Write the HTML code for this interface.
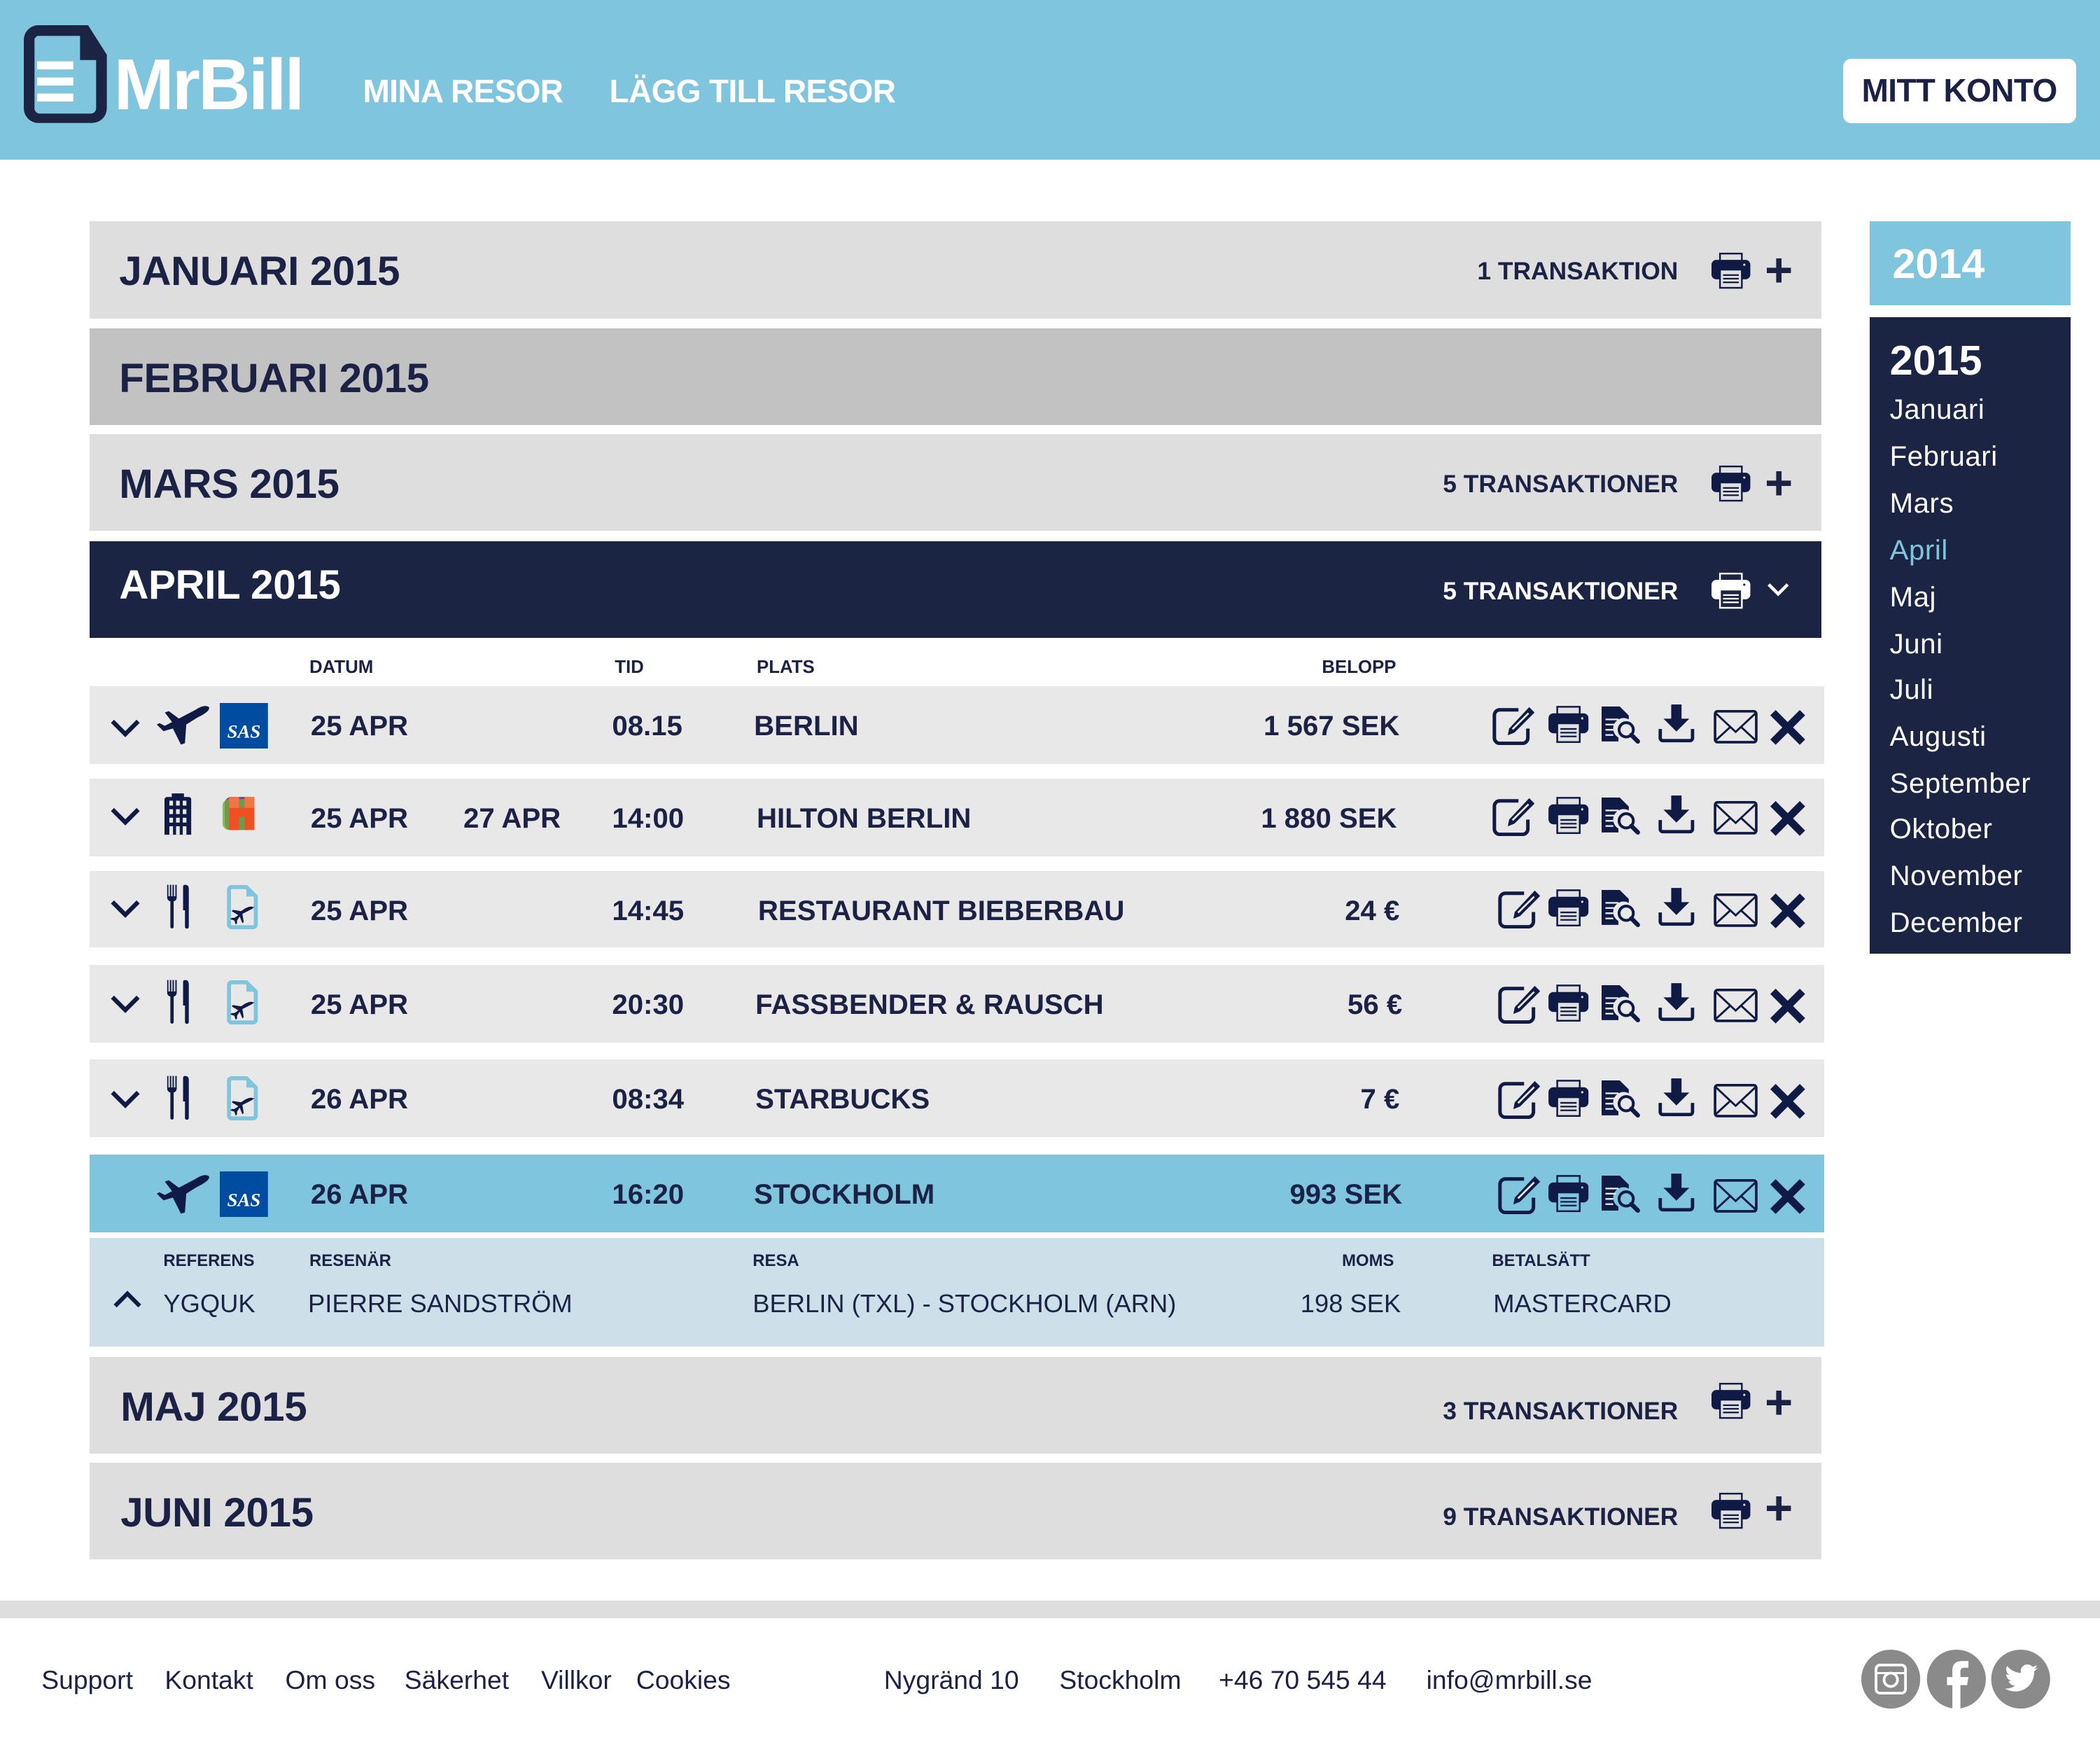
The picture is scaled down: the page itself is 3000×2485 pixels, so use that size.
<!DOCTYPE html>
<html><head><meta charset="utf-8">
<style>
html,body{margin:0;padding:0;background:#fff;}
body{width:1568px;height:1299px;zoom:1.91327;position:relative;overflow:hidden;font-family:"Liberation Sans",sans-serif;color:#1b2246;}
.a{position:absolute;}
.hdr{left:0;top:0;width:1568px;height:119px;background:#7fc5de;}
.nav{color:#fff;font-weight:bold;font-size:24px;top:54px;letter-spacing:-0.3px}
.btn{left:1376px;top:44px;width:174px;height:48px;background:#fff;border-radius:6px;font-weight:bold;font-size:24px;line-height:48px;text-align:center;color:#1b2246;letter-spacing:-0.3px}
.bar{left:67px;width:1293px;height:73px;background:#dedede;}
.bar .t{position:absolute;left:22px;top:0;line-height:75px;font-weight:bold;font-size:30.5px;letter-spacing:-0.2px}
.bar .n{position:absolute;right:107px;top:0;line-height:75px;font-weight:bold;font-size:18.5px;}
.bar .p{position:absolute;left:1211px;top:23px;width:29px;height:28px;}
.bar .pl{position:absolute;left:1252px;top:28px;width:18px;height:18px;}
.row{left:67px;width:1295px;height:58px;background:#e8e8e8;}
.row>*{position:absolute;}
.row .tx{top:0;line-height:60px;font-weight:bold;font-size:21px;white-space:nowrap}
svg{overflow:visible}
.lab{font-weight:bold;font-size:13.5px;top:491px}
.side{left:1396px;width:150px;}
.mon{position:absolute;left:15px;font-size:21px;color:#fff;letter-spacing:0.3px}
.ft{top:1243px;font-size:19.5px;color:#1b2246}
.dv{top:962px;font-size:19px}
</style></head><body>
<svg width="0" height="0" style="position:absolute">
<defs>
<symbol id="prn" viewBox="0 0 32 30"><rect x="7" y="0.8" width="18" height="7" fill="var(--pp,#e0e0e0)" stroke="currentColor" stroke-width="1.4"/><rect x="0" y="6" width="32" height="16" rx="4" fill="currentColor"/><circle cx="27" cy="10" r="0.9" fill="var(--pp,#e0e0e0)"/><rect x="7" y="14" width="18" height="15" fill="var(--pp,#e0e0e0)" stroke="currentColor" stroke-width="1.4"/><path d="M9.5 18.5h13M9.5 21.5h13M9.5 24.5h13" stroke="currentColor" stroke-width="1.3"/></symbol>
<symbol id="edit" viewBox="0 0 34 30"><path d="M20 3H6a4 4 0 0 0-4 4v17a4 4 0 0 0 4 4h17a4 4 0 0 0 4-4v-7" fill="none" stroke="currentColor" stroke-width="2.6"/><path d="M28 1l4 4-15 15-5 2 1-5z" fill="currentColor"/><path d="M27 5l1 1-12 12-1-1z" fill="#e8e8e8"/></symbol>
<symbol id="doc" viewBox="0 0 30 30"><path d="M0 0h14l7 7v3a8 8 0 0 0-8 14v3H0z" fill="currentColor"/><path d="M3 10h10M3 14h8M3 18h6M3 22h6" stroke="#e8e8e8" stroke-width="1.3"/><circle cx="19" cy="18" r="5.5" fill="none" stroke="currentColor" stroke-width="2.2"/><path d="M23 22l5 5" stroke="currentColor" stroke-width="3.4" stroke-linecap="round"/></symbol>
<symbol id="dl" viewBox="0 0 28 30"><path d="M10 0h8v11h6l-10 10L4 11h6z" fill="currentColor"/><path d="M1.5 19v7a2 2 0 0 0 2 2h21a2 2 0 0 0 2-2v-7" fill="none" stroke="currentColor" stroke-width="2.6"/></symbol>
<symbol id="mail" viewBox="0 0 34 26"><rect x="1" y="1" width="32" height="24" rx="2" fill="none" stroke="currentColor" stroke-width="2"/><path d="M1 2l16 15L33 2M1 24l12-11M33 24L21 13" fill="none" stroke="currentColor" stroke-width="1.6"/></symbol>
<symbol id="x" viewBox="0 0 26 26"><path d="M4 0l9 9 9-9 4 4-9 9 9 9-4 4-9-9-9 9-4-4 9-9-9-9z" fill="currentColor"/></symbol>
<symbol id="chev" viewBox="0 0 24 16"><path d="M2 3l10 10 10-10" fill="none" stroke="currentColor" stroke-width="3.4"/></symbol>
<symbol id="plane" viewBox="0 0 40 30"><path d="M39 2C36 0 32 2 29 4L6 16 2 14 0 15l5 5 7-2 6 12 3-1 1-14 8-5c4-2 10-5 9-8z" fill="currentColor"/><path d="M17 11L9 5 6 6l6 8z" fill="currentColor"/></symbol>
<symbol id="bld" viewBox="0 0 22 34"><path d="M2 3h4V0h10v3h4a2 2 0 0 1 2 2v29H0V5a2 2 0 0 1 2-2z" fill="currentColor"/><g fill="#e8e8e8"><rect x="4" y="6" width="3" height="4"/><rect x="9.5" y="6" width="3" height="4"/><rect x="15" y="6" width="3" height="4"/><rect x="4" y="13" width="3" height="4"/><rect x="9.5" y="13" width="3" height="4"/><rect x="15" y="13" width="3" height="4"/><rect x="4" y="20" width="3" height="4"/><rect x="9.5" y="20" width="3" height="4"/><rect x="15" y="20" width="3" height="4"/><rect x="4" y="27" width="3" height="7"/><rect x="9.5" y="27" width="3" height="7"/><rect x="15" y="27" width="3" height="7"/></g></symbol>
<symbol id="fork" viewBox="0 0 20 34"><path d="M1 0v10a3 3 0 0 0 2.5 3V33a1.3 1.3 0 0 0 2.6 0V13A3 3 0 0 0 8.5 10V0H7.4v9H6.3V0H5.2v9H4.2V0H3.1v9H2V0z" fill="currentColor"/><path d="M15 0c2 0 3 1 3 3v30a1.5 1.5 0 0 1-3 0V20h-1.5V3c0-2 0-3 1.5-3z" fill="currentColor"/></symbol>
<symbol id="rcp" viewBox="0 0 30 34"><path d="M10 2h11l7 7v21a2 2 0 0 1-2 2H10a2 2 0 0 1-2-2V4a2 2 0 0 1 2-2z" fill="#e8e8e8" stroke="#7fc5de" stroke-width="3"/><path d="M21 2v7h7" fill="#7fc5de"/><path d="M26 17c-2-1-4 0-6 1l-3 2-6-1-1 1 5 3-3 2-2 0-1 1 3 1 1 3 1-1 0-2 2-3 2 5 1-1-1-6 4-2c2-1 4-2 5-3z" fill="#0f1a45"/></symbol>
<symbol id="sas" viewBox="0 0 36 34"><rect width="36" height="34" fill="#004ca1"/><text x="18" y="26" font-family="Liberation Serif,serif" font-style="italic" font-weight="bold" font-size="14" fill="#fff" text-anchor="middle">SAS</text></symbol>
<symbol id="hot" viewBox="0 0 34 34"><rect x="2" y="2" width="26" height="30" rx="6" fill="#7b3fa0"/><rect x="0" y="4" width="26" height="28" rx="6" fill="#6fb03a" opacity=".8"/><path d="M6 2h9v10h5V2h9v30h-9V20h-5v12H6z" fill="#f04e23" /><path d="M6 2h9v10h5V2h9v10H6z" fill="#f7905a" opacity=".6"/></symbol>
</defs></svg>

<div class="a hdr"></div>
<svg class="a" style="left:18px;top:19px" width="62" height="73" viewBox="0 0 62 73"><path d="M10 0h38l14 22v40a11 11 0 0 1-11 11H10A11 11 0 0 1 0 62V11A11 11 0 0 1 10 0z" fill="#1c2444"/><path d="M10 8h32v18h12v36a4 4 0 0 1-4 4H12a4 4 0 0 1-4-4V10z" fill="#7fc5de"/><path d="M10 30h27M10 42h27M10 54h27" stroke="#fff" stroke-width="6"/></svg>
<div class="a" style="left:85px;top:28px;font-size:54px;font-weight:bold;color:#fff;letter-spacing:-1.5px;line-height:70px">MrBill</div>
<div class="a nav" style="left:271px">MINA RESOR</div>
<div class="a nav" style="left:455px">LÄGG TILL RESOR</div>
<div class="a btn">MITT KONTO</div>

<div class="a bar" style="top:165px"><div class="t">JANUARI 2015</div><div class="n">1 TRANSAKTION</div><svg class="p" style="color:#0f1a45"><use href="#prn"/></svg><svg class="pl" viewBox="0 0 18 18"><path d="M7 0h4v7h7v4h-7v7H7v-7H0V7h7z" fill="#1b2246"/></svg></div>
<div class="a bar" style="top:245px;background:#c2c2c2;height:72px"><div class="t">FEBRUARI 2015</div></div>
<div class="a bar" style="top:324px;height:72px"><div class="t">MARS 2015</div><div class="n">5 TRANSAKTIONER</div><svg class="p" style="color:#0f1a45"><use href="#prn"/></svg><svg class="pl" viewBox="0 0 18 18"><path d="M7 0h4v7h7v4h-7v7H7v-7H0V7h7z" fill="#1b2246"/></svg></div>
<div class="a bar" style="top:404px;height:72px;background:#1c2444;color:#fff"><div class="t" style="line-height:66px">APRIL 2015</div><div class="n">5 TRANSAKTIONER</div><svg class="p" style="color:#fff;--pp:#1c2444"><use href="#prn"/></svg><svg class="pl" style="top:30px;width:17px;height:12px;color:#fff" viewBox="0 0 24 16"><use href="#chev"/></svg></div>

<div class="a lab" style="left:231px">DATUM</div>
<div class="a lab" style="left:459px">TID</div>
<div class="a lab" style="left:565px">PLATS</div>
<div class="a lab" style="left:987px">BELOPP</div>

<div class="a row" style="top:512px">
<svg style="left:15px;top:23px;width:23px;height:16px;color:#0f1a45" viewBox="0 0 24 16"><use href="#chev"/></svg>
<svg style="left:50px;top:14px;width:40px;height:30px;color:#0f1a45"><use href="#plane"/></svg>
<svg style="left:97px;top:13px;width:36px;height:34px"><use href="#sas"/></svg>
<div class="tx" style="left:165px">25 APR</div><div class="tx" style="left:390px">08.15</div><div class="tx" style="left:496px">BERLIN</div><div class="tx" style="right:317px">1 567 SEK</div>
<svg style="left:1047px;top:15px;width:34px;height:30px;color:#0f1a45"><use href="#edit"/></svg><svg style="left:1089px;top:15px;width:30px;height:28px;color:#0f1a45"><use href="#prn"/></svg><svg style="left:1129px;top:15px;width:29px;height:30px;color:#0f1a45"><use href="#doc"/></svg><svg style="left:1171px;top:14px;width:27px;height:29px;color:#0f1a45"><use href="#dl"/></svg><svg style="left:1212px;top:18px;width:34px;height:25px;color:#0f1a45"><use href="#mail"/></svg><svg style="left:1255px;top:18px;width:26px;height:26px;color:#0f1a45"><use href="#x"/></svg>
</div>

<div class="a row" style="top:581px">
<svg style="left:15px;top:20px;width:23px;height:16px;color:#0f1a45" viewBox="0 0 24 16"><use href="#chev"/></svg>
<svg style="left:56px;top:11px;width:20px;height:31px;color:#0f1a45"><use href="#bld"/></svg>
<svg style="left:97px;top:12px;width:32px;height:28px"><use href="#hot"/></svg>
<div class="tx" style="left:165px">25 APR</div><div class="tx" style="left:279px">27 APR</div><div class="tx" style="left:390px">14:00</div><div class="tx" style="left:498px">HILTON BERLIN</div><div class="tx" style="right:319px">1 880 SEK</div>
<svg style="left:1047px;top:14px;width:34px;height:30px;color:#0f1a45"><use href="#edit"/></svg><svg style="left:1089px;top:14px;width:30px;height:28px;color:#0f1a45"><use href="#prn"/></svg><svg style="left:1129px;top:14px;width:29px;height:30px;color:#0f1a45"><use href="#doc"/></svg><svg style="left:1171px;top:13px;width:27px;height:29px;color:#0f1a45"><use href="#dl"/></svg><svg style="left:1212px;top:17px;width:34px;height:25px;color:#0f1a45"><use href="#mail"/></svg><svg style="left:1255px;top:17px;width:26px;height:26px;color:#0f1a45"><use href="#x"/></svg>
</div>

<div class="a row" style="top:650px;height:57px">
<svg style="left:15px;top:20px;width:23px;height:16px;color:#0f1a45" viewBox="0 0 24 16"><use href="#chev"/></svg>
<svg style="left:57px;top:10px;width:19px;height:33px;color:#0f1a45"><use href="#fork"/></svg>
<svg style="left:94px;top:10px;width:34px;height:34px"><use href="#rcp"/></svg>
<div class="tx" style="left:165px">25 APR</div><div class="tx" style="left:390px">14:45</div><div class="tx" style="left:499px">RESTAURANT BIEBERBAU</div><div class="tx" style="right:317px">24 €</div>
<svg style="left:1051px;top:14px;width:34px;height:30px;color:#0f1a45"><use href="#edit"/></svg><svg style="left:1089px;top:14px;width:30px;height:28px;color:#0f1a45"><use href="#prn"/></svg><svg style="left:1129px;top:14px;width:29px;height:30px;color:#0f1a45"><use href="#doc"/></svg><svg style="left:1171px;top:13px;width:27px;height:29px;color:#0f1a45"><use href="#dl"/></svg><svg style="left:1212px;top:17px;width:34px;height:25px;color:#0f1a45"><use href="#mail"/></svg><svg style="left:1255px;top:17px;width:26px;height:26px;color:#0f1a45"><use href="#x"/></svg>
</div>

<div class="a row" style="top:720px">
<svg style="left:15px;top:21px;width:23px;height:16px;color:#0f1a45" viewBox="0 0 24 16"><use href="#chev"/></svg>
<svg style="left:57px;top:11px;width:19px;height:33px;color:#0f1a45"><use href="#fork"/></svg>
<svg style="left:94px;top:11px;width:34px;height:34px"><use href="#rcp"/></svg>
<div class="tx" style="left:165px">25 APR</div><div class="tx" style="left:390px">20:30</div><div class="tx" style="left:497px">FASSBENDER &amp; RAUSCH</div><div class="tx" style="right:315px">56 €</div>
<svg style="left:1051px;top:15px;width:34px;height:30px;color:#0f1a45"><use href="#edit"/></svg><svg style="left:1089px;top:15px;width:30px;height:28px;color:#0f1a45"><use href="#prn"/></svg><svg style="left:1129px;top:15px;width:29px;height:30px;color:#0f1a45"><use href="#doc"/></svg><svg style="left:1171px;top:14px;width:27px;height:29px;color:#0f1a45"><use href="#dl"/></svg><svg style="left:1212px;top:18px;width:34px;height:25px;color:#0f1a45"><use href="#mail"/></svg><svg style="left:1255px;top:18px;width:26px;height:26px;color:#0f1a45"><use href="#x"/></svg>
</div>

<div class="a row" style="top:791px">
<svg style="left:15px;top:21px;width:23px;height:16px;color:#0f1a45" viewBox="0 0 24 16"><use href="#chev"/></svg>
<svg style="left:57px;top:12px;width:19px;height:33px;color:#0f1a45"><use href="#fork"/></svg>
<svg style="left:94px;top:12px;width:34px;height:34px"><use href="#rcp"/></svg>
<div class="tx" style="left:165px">26 APR</div><div class="tx" style="left:390px">08:34</div><div class="tx" style="left:497px">STARBUCKS</div><div class="tx" style="right:317px">7 €</div>
<svg style="left:1051px;top:15px;width:34px;height:30px;color:#0f1a45"><use href="#edit"/></svg><svg style="left:1089px;top:15px;width:30px;height:28px;color:#0f1a45"><use href="#prn"/></svg><svg style="left:1129px;top:15px;width:29px;height:30px;color:#0f1a45"><use href="#doc"/></svg><svg style="left:1171px;top:14px;width:27px;height:29px;color:#0f1a45"><use href="#dl"/></svg><svg style="left:1212px;top:18px;width:34px;height:25px;color:#0f1a45"><use href="#mail"/></svg><svg style="left:1255px;top:18px;width:26px;height:26px;color:#0f1a45"><use href="#x"/></svg>
</div>

<div class="a row" style="top:862px;background:#7fc5de">
<svg style="left:50px;top:14px;width:40px;height:30px;color:#0f1a45"><use href="#plane"/></svg>
<svg style="left:97px;top:12px;width:36px;height:35px"><use href="#sas"/></svg>
<div class="tx" style="left:165px">26 APR</div><div class="tx" style="left:390px">16:20</div><div class="tx" style="left:496px">STOCKHOLM</div><div class="tx" style="right:315px">993 SEK</div>
<svg style="left:1051px;top:15px;width:34px;height:30px;color:#0f1a45"><use href="#edit"/></svg><svg style="left:1089px;top:15px;width:30px;height:28px;color:#0f1a45;--pp:#7fc5de"><use href="#prn"/></svg><svg style="left:1129px;top:15px;width:29px;height:30px;color:#0f1a45"><use href="#doc"/></svg><svg style="left:1171px;top:14px;width:27px;height:29px;color:#0f1a45"><use href="#dl"/></svg><svg style="left:1212px;top:18px;width:34px;height:25px;color:#0f1a45"><use href="#mail"/></svg><svg style="left:1255px;top:18px;width:26px;height:26px;color:#0f1a45"><use href="#x"/></svg>
</div>

<div class="a" style="left:67px;top:924px;width:1295px;height:81px;background:#cde0ea"></div>
<div class="a" style="left:122px;top:934px;font-size:12.5px;font-weight:bold">REFERENS</div>
<div class="a" style="left:231px;top:934px;font-size:12.5px;font-weight:bold">RESENÄR</div>
<div class="a" style="left:562px;top:934px;font-size:12.5px;font-weight:bold">RESA</div>
<div class="a" style="left:1002px;top:934px;font-size:12.5px;font-weight:bold">MOMS</div>
<div class="a" style="left:1114px;top:934px;font-size:12.5px;font-weight:bold">BETALSÄTT</div>
<svg class="a" style="left:84px;top:963px;width:22px;height:15px;color:#0f1a45;transform:rotate(180deg)" viewBox="0 0 24 16"><use href="#chev"/></svg>
<div class="a dv" style="left:122px">YGQUK</div>
<div class="a dv" style="left:230px">PIERRE SANDSTRÖM</div>
<div class="a dv" style="left:562px">BERLIN (TXL) - STOCKHOLM (ARN)</div>
<div class="a dv" style="left:971px">198 SEK</div>
<div class="a dv" style="left:1115px">MASTERCARD</div>

<div class="a bar" style="top:1013px;height:72px"><div class="t" style="left:23px">MAJ 2015</div><div class="n" style="top:3px">3 TRANSAKTIONER</div><svg class="p" style="color:#0f1a45;top:19px"><use href="#prn"/></svg><svg class="pl" style="top:25px" viewBox="0 0 18 18"><path d="M7 0h4v7h7v4h-7v7H7v-7H0V7h7z" fill="#1b2246"/></svg></div>
<div class="a bar" style="top:1092px;height:72px"><div class="t" style="left:23px">JUNI 2015</div><div class="n" style="top:3px">9 TRANSAKTIONER</div><svg class="p" style="color:#0f1a45;top:22px"><use href="#prn"/></svg><svg class="pl" style="top:25px" viewBox="0 0 18 18"><path d="M7 0h4v7h7v4h-7v7H7v-7H0V7h7z" fill="#1b2246"/></svg></div>

<div class="a side" style="top:165px;height:63px;background:#7fc5de"><div style="position:absolute;left:17px;top:14px;font-size:31px;font-weight:bold;color:#fff">2014</div></div>
<div class="a side" style="top:237px;height:475px;background:#1c2444">
<div style="position:absolute;left:15px;top:14px;font-size:31px;font-weight:bold;color:#fff">2015</div>
<div class="mon" style="top:57px">Januari</div>
<div class="mon" style="top:92px">Februari</div>
<div class="mon" style="top:127px">Mars</div>
<div class="mon" style="top:162px;color:#7fc5de">April</div>
<div class="mon" style="top:197px">Maj</div>
<div class="mon" style="top:232px">Juni</div>
<div class="mon" style="top:266px">Juli</div>
<div class="mon" style="top:301px">Augusti</div>
<div class="mon" style="top:336px">September</div>
<div class="mon" style="top:370px">Oktober</div>
<div class="mon" style="top:405px">November</div>
<div class="mon" style="top:440px">December</div>
</div>

<div class="a" style="left:0;top:1195px;width:1568px;height:13px;background:#dedede"></div>
<div class="a ft" style="left:31px">Support</div>
<div class="a ft" style="left:123px">Kontakt</div>
<div class="a ft" style="left:213px">Om oss</div>
<div class="a ft" style="left:302px">Säkerhet</div>
<div class="a ft" style="left:404px">Villkor</div>
<div class="a ft" style="left:475px">Cookies</div>
<div class="a ft" style="left:660px">Nygränd 10</div>
<div class="a ft" style="left:791px">Stockholm</div>
<div class="a ft" style="left:910px">+46 70 545 44</div>
<div class="a ft" style="left:1065px">info@mrbill.se</div>
<svg class="a" style="left:1390px;top:1231px" width="142" height="45" viewBox="0 0 142 45">
<circle cx="22" cy="22.5" r="22" fill="#8a8a8a"/><rect x="11" y="12" width="22" height="21" rx="3" fill="none" stroke="#fff" stroke-width="2"/><circle cx="22" cy="23" r="5" fill="none" stroke="#fff" stroke-width="2"/><path d="M11 18h22" stroke="#fff" stroke-width="1.5"/>
<circle cx="71" cy="22.5" r="22" fill="#8a8a8a"/><path d="M74 45V27h5l1-6h-6v-4c0-2 1-3 3-3h3V9h-5c-5 0-7 3-7 7v5h-4v6h4v18z" fill="#fff"/>
<circle cx="119" cy="22.5" r="22" fill="#8a8a8a"/><path d="M132 14c-1 .5-2 .8-3 .9 1-.7 2-1.7 2-2.8-1 .6-2 1-3.2 1.2a5 5 0 0 0-8.6 4.6c-4-.2-7.8-2-10.3-5.200-1.4 2.4-.6 5.3 1.6 6.7-.8 0-1.6-.3-2.3-.6 0 2.4 1.7 4.6 4 5-.7.2-1.5.2-2.2.1.6 2 2.5 3.4 4.7 3.5-2 1.6-4.7 2.4-7.4 2.1 2.2 1.4 4.8 2.2 7.6 2.2 9.3 0 14.5-7.9 14.2-15z" fill="#fff"/>
</svg>
</body></html>
